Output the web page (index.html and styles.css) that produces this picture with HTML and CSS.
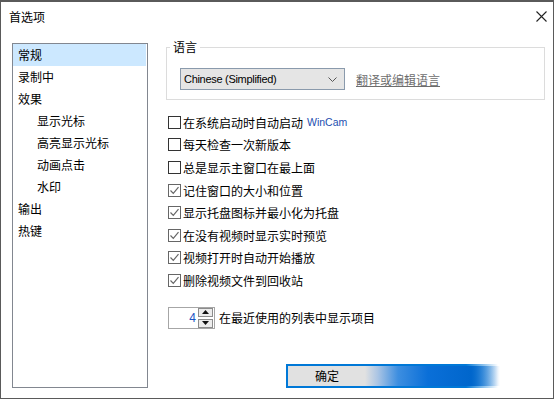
FILE: index.html
```html
<!DOCTYPE html>
<html lang="zh-CN">
<head>
<meta charset="utf-8">
<title>首选项</title>
<link rel="stylesheet" href="styles.css">
</head>
<body>
<div class="window">
  <div class="titlebar">
    <span class="title">首选项</span>
    <svg class="close" width="11" height="11" viewBox="0 0 11 11"><path d="M0.5 0.5 L10.5 10.5 M10.5 0.5 L0.5 10.5" stroke="#222" stroke-width="1.1" fill="none"/></svg>
  </div>
  <div class="main">
    <ul class="nav">
      <li class="sel">常规</li>
      <li>录制中</li>
      <li>效果</li>
      <li class="sub">显示光标</li>
      <li class="sub">高亮显示光标</li>
      <li class="sub">动画点击</li>
      <li class="sub">水印</li>
      <li>输出</li>
      <li>热键</li>
    </ul>
    <div class="pane">
      <fieldset class="group">
        <legend>语言</legend>
        <div class="lang-row">
          <div class="select">
            <span class="select-text">Chinese (Simplified)</span>
            <svg width="9" height="5" viewBox="0 0 9 5"><path d="M0.5 0.5 L4.5 4.5 L8.5 0.5" stroke="#555" stroke-width="1" fill="none"/></svg>
          </div>
          <span class="link">翻译或编辑语言</span>
        </div>
      </fieldset>
      <div class="checks">
        <div class="check"><span class="box"></span><span>在系统启动时自动启动</span><span class="brand">WinCam</span></div>
        <div class="check"><span class="box"></span><span>每天检查一次新版本</span></div>
        <div class="check"><span class="box"></span><span>总是显示主窗口在最上面</span></div>
        <div class="check"><span class="box on"><svg width="11" height="11" viewBox="0 0 11 11"><path d="M1.5 5.5 L4.3 8.3 L9.5 2.2" stroke="#666" stroke-width="1.2" fill="none"/></svg></span><span>记住窗口的大小和位置</span></div>
        <div class="check"><span class="box on"><svg width="11" height="11" viewBox="0 0 11 11"><path d="M1.5 5.5 L4.3 8.3 L9.5 2.2" stroke="#666" stroke-width="1.2" fill="none"/></svg></span><span>显示托盘图标并最小化为托盘</span></div>
        <div class="check"><span class="box on"><svg width="11" height="11" viewBox="0 0 11 11"><path d="M1.5 5.5 L4.3 8.3 L9.5 2.2" stroke="#666" stroke-width="1.2" fill="none"/></svg></span><span>在没有视频时显示实时预览</span></div>
        <div class="check"><span class="box on"><svg width="11" height="11" viewBox="0 0 11 11"><path d="M1.5 5.5 L4.3 8.3 L9.5 2.2" stroke="#666" stroke-width="1.2" fill="none"/></svg></span><span>视频打开时自动开始播放</span></div>
        <div class="check"><span class="box on"><svg width="11" height="11" viewBox="0 0 11 11"><path d="M1.5 5.5 L4.3 8.3 L9.5 2.2" stroke="#666" stroke-width="1.2" fill="none"/></svg></span><span>删除视频文件到回收站</span></div>
      </div>
      <div class="spin-row">
        <div class="spinner">
          <span class="spin-val">4</span>
          <div class="updown">
            <span class="ud"><svg width="7" height="4" viewBox="0 0 7 4"><path d="M0 4 L3.5 0 L7 4 Z" fill="#111"/></svg></span>
            <span class="ud"><svg width="7" height="4" viewBox="0 0 7 4"><path d="M0 0 L3.5 4 L7 0 Z" fill="#111"/></svg></span>
          </div>
        </div>
        <span>在最近使用的列表中显示项目</span>
      </div>
      <div class="footer">
        <div class="ok"><div class="ok-inner">确定</div></div>
      </div>
    </div>
  </div>
</div>
</body>
</html>
```
FILE: styles.css
```css
body {
  margin: 0;
  background: #fff;
  font-family: "Noto Sans CJK SC", "Noto Sans", sans-serif;
  font-size: 12px;
  color: #000;
}
.window {
  width: 554px;
  height: 399px;
  box-sizing: border-box;
  border: 1px solid #5a5a5a;
  border-top-width: 2px;
  overflow: hidden;
}
.titlebar {
  height: 37px;
  display: flex;
  justify-content: space-between;
  align-items: flex-start;
  padding: 0 6px 0 8px;
}
.title {
  margin-top: 6px;
  line-height: 18px;
  font-size: 12px;
}
.close {
  margin-top: 9px;
}
.main {
  display: flex;
  padding-left: 11px;
}
.nav {
  list-style: none;
  margin: 4px 0 0;
  padding: 0;
  width: 136px;
  height: 345px;
  box-sizing: border-box;
  border: 1px solid #828790;
}
.nav li {
  height: 22px;
  line-height: 22px;
  padding-left: 5px;
}
.nav li.sub {
  padding-left: 24px;
}
.nav li.sel {
  background: #cce8ff;
  margin-right: 1px;
}
.pane {
  margin-left: 18px;
  width: 379px;
  display: flex;
  flex-direction: column;
}
.group {
  margin: 0;
  padding: 0;
  border: 1px solid #dcdcdc;
  min-width: 0;
}
.group legend {
  margin-left: 3px;
  padding: 0 3px;
  line-height: 16px;
  font-size: 12px;
}
.lang-row {
  display: flex;
  align-items: center;
  padding: 13px 0 9px 13px;
}
.select {
  width: 165px;
  height: 22px;
  box-sizing: border-box;
  border: 1px solid #8a9aac;
  background: #e5e5e5;
  display: flex;
  align-items: center;
  justify-content: space-between;
  padding: 0 7px 0 3px;
}
.select-text {
  font-family: "Liberation Sans", sans-serif;
  font-size: 11px;
  letter-spacing: -0.3px;
}
.link {
  margin-left: 11px;
  color: #6d6d6d;
  text-decoration: underline;
}
.checks {
  margin-top: 11px;
  margin-left: 2px;
  display: flex;
  flex-direction: column;
}
.check {
  height: 22.6px;
  display: flex;
  align-items: center;
}
.box {
  width: 13px;
  height: 13px;
  box-sizing: border-box;
  border: 1px solid #333;
  margin-right: 2px;
  display: flex;
  align-items: center;
  justify-content: center;
  background: #fff;
}
.box.on {
  border-color: #666;
}
.brand {
  margin-left: 4px;
  font-family: "Liberation Sans", sans-serif;
  font-size: 10.5px;
  color: #1d4fb0;
}
.spin-row {
  margin-top: 15px;
  margin-left: 2px;
  display: flex;
  align-items: center;
  gap: 4px;
}
.spinner {
  width: 47px;
  height: 22px;
  box-sizing: border-box;
  border: 1px solid #a6a6a6;
  display: flex;
  align-items: stretch;
  justify-content: flex-end;
}
.spin-val {
  font-family: "Liberation Sans", sans-serif;
  font-size: 12px;
  color: #1a54c4;
  line-height: 20px;
  margin-right: 2px;
}
.updown {
  display: flex;
  flex-direction: column;
  justify-content: space-between;
  padding: 0 1px 0 0;
  width: 15px;
}
.ud {
  height: 9px;
  box-sizing: border-box;
  border: 1px solid #8c8c8c;
  background: #ececec;
  display: flex;
  align-items: center;
  justify-content: center;
}
.footer {
  margin-top: 35px;
  padding-left: 120px;
}
.ok {
  width: 214px;
  height: 24px;
  box-sizing: border-box;
  padding: 2px 0 2px 2px;
  background: linear-gradient(to right, #0078d7 0, #0078d7 180px, rgba(255,255,255,0) 212px);
}
.ok-inner {
  height: 100%;
  line-height: 20px;
  padding-left: 27px;
  background: linear-gradient(to right, #e1e1e1 0, #e1e1e1 77px, #a9c4e4 90px, #3d8ee0 110px, #0a6fd8 140px, #0066cc 183px, rgba(255,255,255,0) 212px);
}
```
